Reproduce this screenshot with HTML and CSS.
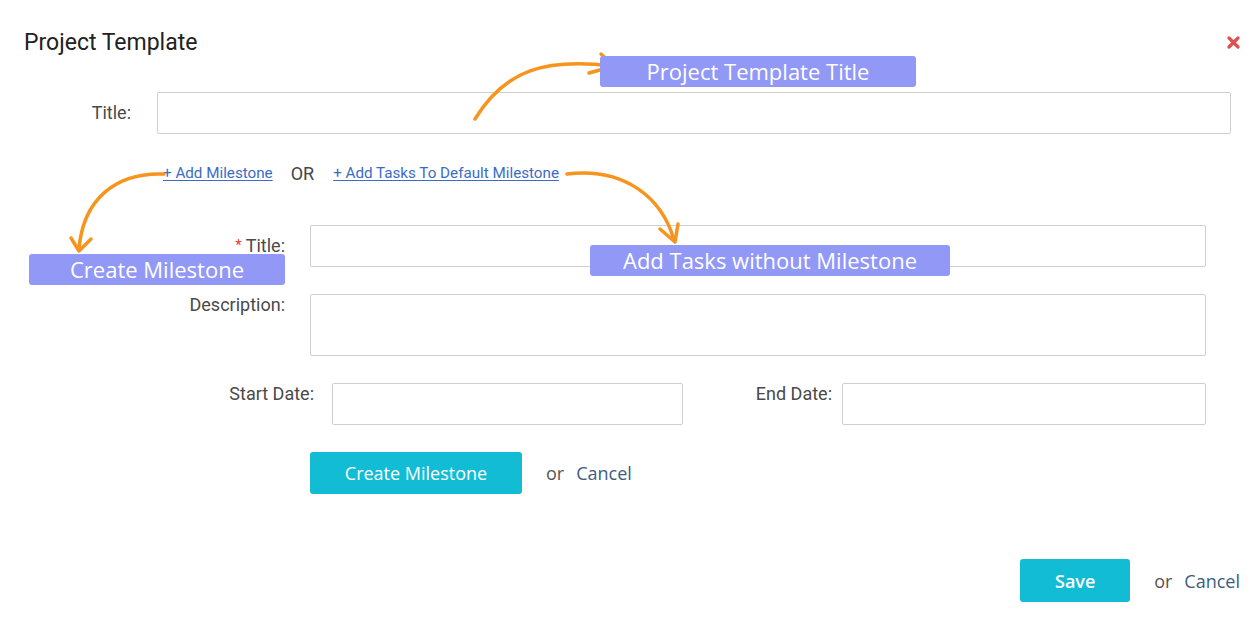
FILE: index.html
```html
<!DOCTYPE html>
<html lang="en">
<head>
<meta charset="utf-8">
<title>Project Template</title>
<link rel="stylesheet" href="styles.css">
</head>
<body>
<div class="dialog">
  <div class="header">
    <h1 class="heading">Project Template</h1>
    <svg class="close" width="13" height="13" viewBox="0 0 13 13" aria-label="Close">
      <path d="M2 2 L11 11 M11 2 L2 11" stroke="#e0504f" stroke-width="3.2" stroke-linecap="round"/>
    </svg>
  </div>

  <div class="row row-title">
    <label class="label label-main">Title:</label>
    <div class="input"></div>
  </div>

  <div class="links">
    <a class="link" href="#">+ Add Milestone</a>
    <span class="or-sep">OR</span>
    <a class="link" href="#">+ Add Tasks To Default Milestone</a>
  </div>

  <div class="milestone">
    <div class="row row-ms-title">
      <label class="label label-ms"><span class="req">*</span> Title:</label>
      <div class="input"></div>
    </div>
    <div class="row row-desc">
      <label class="label label-ms">Description:</label>
      <div class="input textarea"></div>
    </div>
    <div class="row row-dates">
      <label class="label label-start">Start Date:</label>
      <div class="input date-start"></div>
      <label class="label label-end">End Date:</label>
      <div class="input date-end"></div>
    </div>
    <div class="actions ms-actions">
      <button class="btn btn-ms">Create Milestone</button>
      <span class="or">or</span>
      <a class="cancel" href="#">Cancel</a>
    </div>
  </div>

  <div class="actions footer">
    <button class="btn btn-save">Save</button>
    <span class="or">or</span>
    <a class="cancel" href="#">Cancel</a>
  </div>
</div>

<div class="overlay">
  <svg class="arrows" width="1260" height="640" viewBox="0 0 1260 640">
    <g fill="none" stroke="#f7941d" stroke-width="3.5" stroke-linecap="round" stroke-linejoin="round">
      <path d="M475 119 C 505 70, 545 58, 612 66"/>
      <path d="M601 54 L 614 66 L 589 73"/>
      <path d="M164 174 C 115 172, 83 200, 79 249"/>
      <path d="M71 238 L 79 251 L 91 239"/>
      <path d="M567 174 C 625 167, 662 198, 674 240"/>
      <path d="M660 229 L 675 242 L 678 224"/>
    </g>
  </svg>
  <div class="note note-1">Project Template Title</div>
  <div class="note note-2">Create Milestone</div>
  <div class="note note-3">Add Tasks without Milestone</div>
</div>
</body>
</html>
```

FILE: styles.css
```css
* { box-sizing: border-box; }

html, body {
  margin: 0;
  padding: 0;
  background: #ffffff;
}

body {
  width: 1260px;
  height: 640px;
  position: relative;
  overflow: hidden;
  font-family: Roboto, "Liberation Sans", Arial, sans-serif;
  color: #454545;
}

.dialog {
  padding: 28px 20px 0 24px;
}

.header {
  display: flex;
  justify-content: space-between;
  align-items: center;
  height: 30px;
}

.heading {
  margin: 0;
  font-size: 23px;
  font-weight: 400;
  line-height: 30px;
  color: #222;
}

.close {
  display: block;
  margin-top: -2px;
}

.row {
  display: flex;
  align-items: flex-start;
}

.label {
  font-size: 18px;
  line-height: 20px;
  text-align: right;
  color: #4a4a4a;
  flex: none;
  white-space: nowrap;
}

.input {
  height: 42px;
  border: 1px solid #cfcfcf;
  border-radius: 2px;
  background: #fff;
  flex: 1;
}

.row-title {
  margin-top: 34px;
  margin-right: 9px;
  align-items: center;
}

.label-main {
  width: 107px;
  margin-right: 26px;
}

.links {
  margin-top: 29px;
  padding-left: 139px;
  display: flex;
  align-items: center;
  height: 20px;
  font-size: 15.2px;
}

.link {
  color: #3b6cc2;
  text-decoration: underline;
  text-underline-offset: 2px;
}

.or-sep {
  margin: 0 19px 0 18px;
  font-size: 18px;
  color: #444;
}

.milestone {
  margin-right: 34px;
}

.row-ms-title {
  margin-top: 42px;
  align-items: center;
}

.label-ms {
  width: 261px;
  margin-right: 25px;
}

.req {
  color: #e53935;
  font-size: 15px;
  position: relative;
  top: -2px;
}

.row-desc {
  margin-top: 27px;
}

.row-desc .label {
  padding-top: 1px;
}

.textarea {
  height: 62px;
}

.row-dates {
  margin-top: 27px;
}

.row-dates .label {
  padding-top: 1px;
}

.label-start {
  width: 290px;
  margin-right: 18px;
}

.date-start {
  flex: none;
  width: 351px;
}

.label-end {
  width: 90px;
  margin-left: 59px;
  margin-right: 10px;
}

.actions {
  display: flex;
  align-items: center;
  font-family: "Open Sans", "Liberation Sans", sans-serif;
  font-size: 18px;
}

.ms-actions {
  margin-top: 27px;
  padding-left: 286px;
}

.btn {
  border: none;
  border-radius: 3px;
  background: #12bcd4;
  color: #fff;
  font-family: "Open Sans", "Liberation Sans", sans-serif;
  font-size: 18px;
  height: 42px;
  padding: 0;
  cursor: pointer;
}

.btn-ms {
  width: 212px;
}

.btn-save {
  width: 110px;
  height: 43px;
  font-weight: 600;
}

.or {
  color: #555;
  margin-left: 24px;
  margin-right: 12px;
}

.cancel {
  color: #3c5d80;
  text-decoration: none;
}

.footer {
  margin-top: 65px;
  justify-content: flex-end;
}

.overlay {
  position: absolute;
  left: 0;
  top: 0;
  width: 1260px;
  height: 640px;
  pointer-events: none;
}

.arrows {
  position: absolute;
  left: 0;
  top: 0;
}

.note {
  position: absolute;
  height: 31px;
  line-height: 31px;
  background: #9298f6;
  color: #fff;
  border-radius: 3px;
  text-align: center;
  font-family: "Open Sans", "Noto Sans", sans-serif;
  font-size: 22px;
}

.note-1 { left: 600px; top: 56px; width: 316px; }
.note-2 { left: 29px; top: 254px; width: 256px; }
.note-3 { left: 590px; top: 245px; width: 360px; }
```
